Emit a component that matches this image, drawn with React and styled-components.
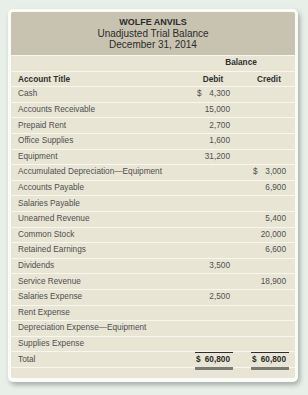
import React from 'react';
import styled, { createGlobalStyle } from 'styled-components';

const GlobalStyle = createGlobalStyle`
    html, body {
        margin: 0;
        padding: 0;
        background-color: #e7efe8;
    }
    body {
        font-family: "Liberation Sans", Arial, Helvetica, sans-serif;
    }
`;

const Page = styled.div`
    width: 308px;
    height: 395px;
    padding: 9px 10px 0 8px;
    box-sizing: border-box;
`;

const Card = styled.div`
    width: 290px;
    box-sizing: border-box;
    border: 3px solid #fbfbf8;
    border-bottom-width: 4px;
    border-radius: 5px;
    background-color: #e8e5d5;
    box-shadow: 2px 3px 5px rgba(0, 0, 0, 0.28);
    overflow: hidden;
`;

const Heading = styled.div`
    height: 43px;
    background-color: #c8c3b0;
    display: flex;
    flex-direction: column;
    align-items: center;
    justify-content: center;
    padding-bottom: 1px;
    box-sizing: border-box;
    color: #2b2b2b;
    font-size: 10px;
    line-height: 11px;
`;

const Company = styled.div`
    font-weight: 700;
    font-size: 9px;
`;

const Row = styled.div`
    display: grid;
    grid-template-columns: 1fr 40px 40px;
    column-gap: 16px;
    align-items: center;
    height: 14.6px;
    padding: 0 6px 0 7px;
    border-top: 1px solid #f7f6ef;
    font-size: 8.25px;
    line-height: 10px;
    color: ${(p) => (p.$head ? '#2f2f2f' : '#4f4f4f')};
    font-weight: ${(p) => (p.$head ? 700 : 400)};
`;

const Title = styled.div`
    white-space: nowrap;
    padding-top: ${(p) => (p.$low ? '2px' : '0')};
`;

const Spanned = styled.div`
    grid-column: 2 / 4;
    text-align: center;
`;

const ColHead = styled.div`
    text-align: center;
    padding-top: 2px;
`;

const Amount = styled.div`
    display: flex;
    justify-content: space-between;
    padding: 0 3px 0 4px;
    white-space: nowrap;
`;

const Total = styled.div`
    display: flex;
    justify-content: space-between;
    margin-left: 2px;
    padding: 0 3px 0 1px;
    height: 14.6px;
    align-items: center;
    box-sizing: border-box;
    border-top: 1px solid #2e2e2e;
    font-weight: 700;
    color: #2a2a2a;
`;

const Footer = styled.div`
    display: grid;
    grid-template-columns: 1fr 40px 40px;
    column-gap: 16px;
    height: 10px;
    padding: 0 6px 0 7px;
    border-top: 1px solid #f7f6ef;
`;

const DoubleRule = styled.div`
    grid-column: ${(p) => p.$col};
    margin: -1px 0 0 2px;
    height: 3px;
    background-color: #7b7a76;
`;

const rows = [
    { title: 'Cash', debit: '4,300', dollarDebit: true },
    { title: 'Accounts Receivable', debit: '15,000' },
    { title: 'Prepaid Rent', debit: '2,700' },
    { title: 'Office Supplies', debit: '1,600' },
    { title: 'Equipment', debit: '31,200' },
    { title: 'Accumulated Depreciation\u2014Equipment', credit: '3,000', dollarCredit: true },
    { title: 'Accounts Payable', credit: '6,900' },
    { title: 'Salaries Payable' },
    { title: 'Unearned Revenue', credit: '5,400' },
    { title: 'Common Stock', credit: '20,000' },
    { title: 'Retained Earnings', credit: '6,600' },
    { title: 'Dividends', debit: '3,500' },
    { title: 'Service Revenue', credit: '18,900' },
    { title: 'Salaries Expense', debit: '2,500' },
    { title: 'Rent Expense' },
    { title: 'Depreciation Expense\u2014Equipment' },
    { title: 'Supplies Expense' },
];

const Figure = ({ value, dollar }) => {
    if (!value) return <Amount />;
    return (
        <Amount>
            <span>{dollar ? '$' : ''}</span>
            <span>{value}</span>
        </Amount>
    );
};

const App = () => {
    return (
        <Page>
            <GlobalStyle />
            <Card>
                <Heading>
                    <Company>WOLFE ANVILS</Company>
                    <div>Unadjusted Trial Balance</div>
                    <div>December 31, 2014</div>
                </Heading>
                <Row $head>
                    <Title />
                    <Spanned>Balance</Spanned>
                </Row>
                <Row $head>
                    <Title $low>Account Title</Title>
                    <ColHead>Debit</ColHead>
                    <ColHead>Credit</ColHead>
                </Row>
                {rows.map((r) => (
                    <Row key={r.title}>
                        <Title>{r.title}</Title>
                        <Figure value={r.debit} dollar={r.dollarDebit} />
                        <Figure value={r.credit} dollar={r.dollarCredit} />
                    </Row>
                ))}
                <Row>
                    <Title>Total</Title>
                    <Total>
                        <span>$</span>
                        <span>60,800</span>
                    </Total>
                    <Total>
                        <span>$</span>
                        <span>60,800</span>
                    </Total>
                </Row>
                <Footer>
                    <DoubleRule $col="2" />
                    <DoubleRule $col="3" />
                </Footer>
            </Card>
        </Page>
    );
};

export default App;
